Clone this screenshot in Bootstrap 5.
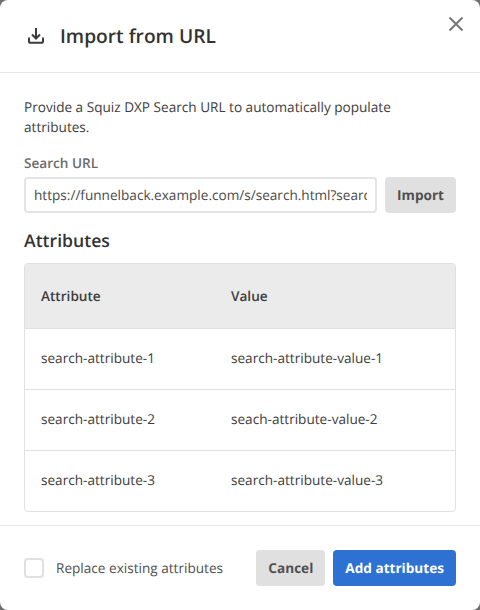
<!DOCTYPE html>
<html lang="en">
<head>
<meta charset="utf-8">
<title>Import from URL</title>
<link href="https://cdn.jsdelivr.net/npm/bootstrap@5.3.0/dist/css/bootstrap.min.css" rel="stylesheet">
<style>
html, body { height: 610px; margin: 0; overflow: hidden; background: #6f6f6f; }
body { font-family: "Open Sans", sans-serif; font-size: 13.6px; color: #3d3d3d; text-rendering: geometricPrecision; }
input, button, label, h1, h2, table { text-rendering: geometricPrecision; }
.dlg { height: 610px; background: #fff; border: 0; border-radius: 8px; }
.dlg-head { height: 73px; padding: 0 24px; gap: 12px; border-bottom: 1px solid #e8e8e8; position: relative; }
.dlg-title { font-size: 19.2px; font-weight: 600; line-height: 28px; margin: 0; color: #333; }
.dlg-x { position: absolute; top: 14px; right: 14px; width: 20px; height: 20px; padding: 0; border: 0; background: none; color: #757575; line-height: 0; }
.dlg-body { padding: 24px 24px 0; }
.intro { line-height: 20px; margin: 0 0 16px; }
.fld-label { font-weight: 600; color: #6b6b6b; line-height: 20px; margin-bottom: 4px; display: block; }
.fld-input.form-control { height: 36px; border: 2px solid #e4e4e4; border-radius: 4px; padding: 0 8px 2px; font-size: 13.6px; color: #4a4a4a; box-shadow: none; }
.btn-soft.btn { background: #e0e0e0; border: 0; color: #4f4f4f; font-weight: 700; font-size: 13.6px; height: 36px; border-radius: 4px; padding: 0 12px; }
.btn-main.btn { background: #2d72d2; border: 0; color: #fff; font-weight: 700; font-size: 13.6px; height: 36px; border-radius: 4px; padding: 0 12px; }
.sect-title { font-size: 17.6px; font-weight: 600; line-height: 24px; margin: 16px 0 10px; color: #333; }
.attr-wrap { border: 1px solid #e0e0e0; border-radius: 4px; overflow: hidden; height: 249px; }
.attr-tbl { margin: 0; table-layout: fixed; font-size: 13.6px; }
.attr-tbl th, .attr-tbl td { padding: 0 16px; vertical-align: middle; border-bottom: 1px solid #e0e0e0; color: #3d3d3d; background: transparent; box-shadow: none; }
.attr-tbl th { background: #ebebeb; font-weight: 600; height: 64px; }
.attr-tbl td { height: 61px; }
.attr-tbl tr:last-child td { border-bottom: 0; height: 60px; }
.attr-tbl th:first-child { width: 190px; }
.dlg-foot { margin-top: 13px; border-top: 1px solid #e8e8e8; padding: 24px 24px 0; }
.chk.form-check-input { width: 20px; height: 20px; margin: 0; border: 2px solid #e0e0e0; border-radius: 4px; }
.chk-label { color: #4f4f4f; }
</style>
</head>
<body>
<div class="dlg d-flex flex-column">
  <div class="dlg-head d-flex align-items-center">
    <svg width="24" height="24" viewBox="0 0 24 24" fill="none" stroke="#3d3d3d" stroke-width="2" aria-hidden="true"><path d="M12 4v10.5M8 10.5l4 4 4-4"/><path d="M5 13.5v3.7c0 .9.7 1.6 1.6 1.6h10.8c.9 0 1.6-.7 1.6-1.6v-3.7"/></svg>
    <h1 class="dlg-title">Import from URL</h1>
    <button type="button" class="dlg-x" aria-label="Close"><svg width="20" height="20" viewBox="0 0 20 20" fill="none" stroke="currentColor" stroke-width="2" aria-hidden="true"><path d="M3.5 3.5l13 13M16.5 3.5l-13 13"/></svg></button>
  </div>
  <div class="dlg-body">
    <p class="intro">Provide a Squiz DXP Search URL to automatically populate attributes.</p>
    <label class="fld-label" for="u">Search URL</label>
    <div class="d-flex gap-2">
      <input id="u" class="form-control fld-input" type="text" value="https://funnelback.example.com/s/search.html?search-attribute-1=search-attribute-value-1">
      <button type="button" class="btn btn-soft flex-shrink-0">Import</button>
    </div>
    <h2 class="sect-title">Attributes</h2>
    <div class="attr-wrap">
      <table class="table attr-tbl">
        <thead><tr><th>Attribute</th><th>Value</th></tr></thead>
        <tbody>
          <tr><td>search-attribute-1</td><td>search-attribute-value-1</td></tr>
          <tr><td>search-attribute-2</td><td>seach-attribute-value-2</td></tr>
          <tr><td>search-attribute-3</td><td>search-attribute-value-3</td></tr>
        </tbody>
      </table>
    </div>
  </div>
  <div class="dlg-foot d-flex align-items-center">
    <input class="form-check-input chk" type="checkbox" id="r">
    <label class="chk-label ms-2 ps-1" for="r">Replace existing attributes</label>
    <button type="button" class="btn btn-soft ms-auto me-2">Cancel</button>
    <button type="button" class="btn btn-main">Add attributes</button>
  </div>
</div>
</body>
</html>
